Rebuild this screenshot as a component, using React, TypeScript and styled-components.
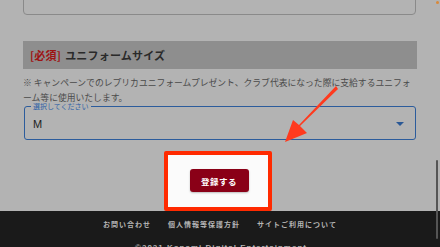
import React from "react";
import styled, { createGlobalStyle } from "styled-components";

const Global = createGlobalStyle`
  html, body { margin: 0; padding: 0; }
  body {
    width: 440px;
    height: 247px;
    overflow: hidden;
    background: #b3b3b3;
    font-family: "Noto Sans CJK JP", "Noto Sans", sans-serif;
  }
`;

const Screen = styled.div`
  position: relative;
  width: 440px;
  height: 247px;
  overflow: hidden;
  background: #b3b3b3;
  display: flex;
  flex-direction: column;
`;

const Content = styled.div`
  padding: 0 23px 0 23px;
  display: flex;
  flex-direction: column;
`;

const PrevInput = styled.div`
  height: 40px;
  margin-top: -27px;
  margin-right: 1px;
  border: 1px solid #8a8a8a;
  border-radius: 4px;
`;

const SectionBar = styled.div`
  margin-top: 26px;
  height: 28px;
  background: #8e8e8e;
  display: flex;
  align-items: center;
  padding-left: 7px;
  font-size: 11px;
  font-weight: 700;
  color: #2a2a2a;
  letter-spacing: 0.2px;
`;

const Required = styled.span`
  color: #9e1313;
  margin-right: 4px;
`;

const Note = styled.p`
  margin: 6px 0 0 0;
  font-size: 8.8px;
  line-height: 15px;
  color: #4a4a4a;
`;

const SelectBox = styled.div`
  position: relative;
  margin-top: 1px;
  margin-left: 1px;
  margin-right: 1px;
  height: 34px;
  box-sizing: border-box;
  border: 1.5px solid #2c5c9c;
  border-radius: 3px;
  display: flex;
  align-items: center;
  justify-content: space-between;
  padding: 2px 11px 0 8px;
`;

const FloatLabel = styled.span`
  position: absolute;
  top: -5px;
  left: 6px;
  padding: 0 2px;
  background: #b3b3b3;
  font-size: 7px;
  line-height: 8px;
  color: #2f62a6;
`;

const Value = styled.span`
  font-family: "Liberation Sans", Arial, sans-serif;
  font-size: 11px;
  color: #222;
`;

const Caret = styled.span`
  width: 0;
  height: 0;
  border-left: 4px solid transparent;
  border-right: 4px solid transparent;
  border-top: 4px solid #2a5895;
`;

const ActionRow = styled.div`
  margin-top: 11px;
  display: flex;
  justify-content: center;
  padding-right: 4px;
`;

const Highlight = styled.div`
  width: 108px;
  height: 60px;
  box-sizing: border-box;
  border: 4px solid #ff2a00;
  border-radius: 2px;
  background: #fbfbfb;
  display: flex;
  align-items: center;
  justify-content: center;
  padding-left: 2px;
  padding-bottom: 1px;
`;

const SubmitButton = styled.button`
  width: 59px;
  height: 23px;
  border: none;
  border-radius: 3px;
  background: #8a0017;
  color: #fff;
  font-family: "Noto Sans CJK JP", sans-serif;
  font-size: 8.5px;
  font-weight: 700;
  letter-spacing: 0.5px;
  padding: 0;
  box-shadow: 0 1px 2px rgba(0, 0, 0, 0.25);
`;

const Footer = styled.footer`
  flex: 1;
  background: #1a1a1a;
  display: flex;
  flex-direction: column;
  align-items: center;
  padding-top: 7px;
`;

const FooterLinks = styled.nav`
  display: flex;
  gap: 17px;
`;

const FooterLink = styled.span`
  font-size: 7px;
  font-weight: 700;
  letter-spacing: 1px;
  color: #b5b5b5;
  line-height: 12px;
`;

const Copyright = styled.div`
  margin-top: 13px;
  font-family: "Liberation Sans", Arial, sans-serif;
  font-size: 8px;
  font-weight: 700;
  letter-spacing: 1px;
  color: #b5b5b5;
  padding-left: 2px;
`;

const ScrollThumb = styled.div`
  position: absolute;
  left: 436px;
  top: 160px;
  width: 2px;
  height: 79px;
  border-radius: 1px;
  background: #555;
`;

const Dot = styled.div`
  position: absolute;
  left: 436px;
  top: 1px;
  width: 3px;
  height: 3px;
  border-radius: 50%;
  background: #d9893a;
`;

const ArrowLayer = styled.svg`
  position: absolute;
  left: 0;
  top: 0;
  pointer-events: none;
`;

export default function App() {
  return (
    <>
      <Global />
      <Screen>
        <Content>
          <PrevInput />
          <SectionBar>
            <Required>[必須]</Required>ユニフォームサイズ
          </SectionBar>
          <Note>
            ※ キャンペーンでのレプリカユニフォームプレゼント、クラブ代表になった際に支給するユニフォーム等に使用いたします。
          </Note>
          <SelectBox>
            <FloatLabel>選択してください</FloatLabel>
            <Value>M</Value>
            <Caret />
          </SelectBox>
          <ActionRow>
            <Highlight>
              <SubmitButton>登録する</SubmitButton>
            </Highlight>
          </ActionRow>
        </Content>
        <Footer>
          <FooterLinks>
            <FooterLink>お問い合わせ</FooterLink>
            <FooterLink>個人情報等保護方針</FooterLink>
            <FooterLink>サイトご利用について</FooterLink>
          </FooterLinks>
          <Copyright>©2021 Konami Digital Entertainment</Copyright>
        </Footer>
        <ScrollThumb />
        <Dot />
        <ArrowLayer width="440" height="247" viewBox="0 0 440 247">
          <path
            d="M336 86 L338 89 L300 126 L307 133 L285 142 L293 120 L299 125 Z"
            fill="#ff3a1e"
          />
        </ArrowLayer>
      </Screen>
    </>
  );
}
